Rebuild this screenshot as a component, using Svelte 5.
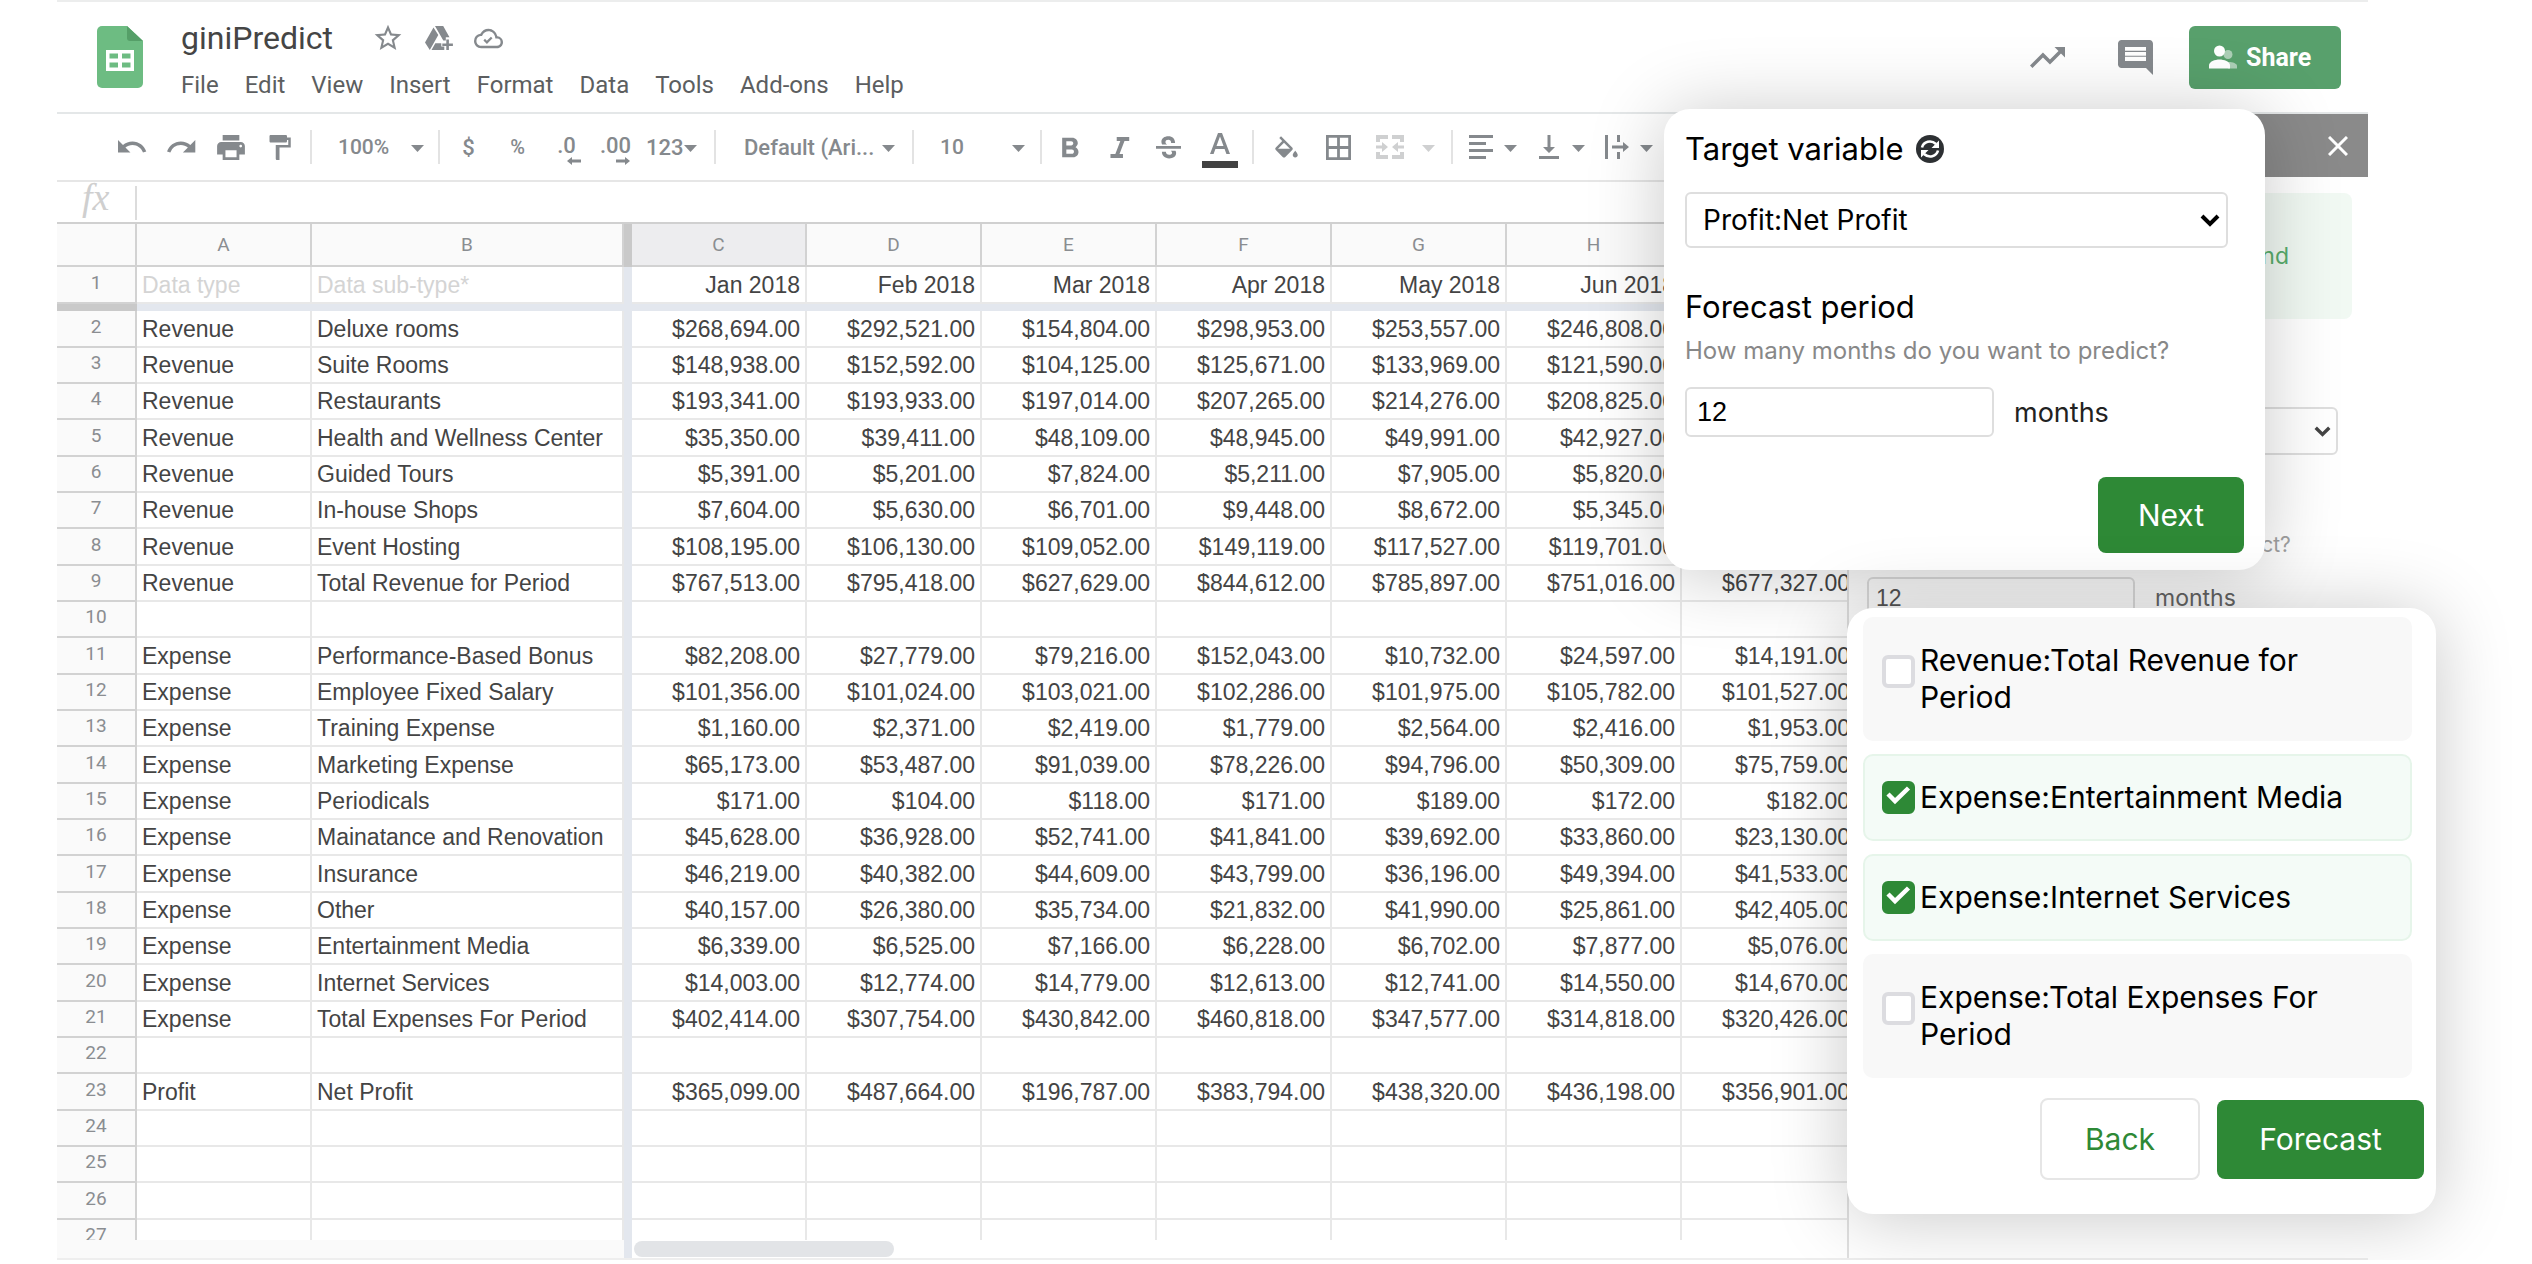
<script>
  const columns = ['C', 'D', 'E', 'F', 'G', 'H', 'I'];
  const months = ['Jan 2018', 'Feb 2018', 'Mar 2018', 'Apr 2018', 'May 2018', 'Jun 2018', ''];
  const menus = ['File', 'Edit', 'View', 'Insert', 'Format', 'Data', 'Tools', 'Add-ons', 'Help'];

  // type | sub-type | one whole-dollar amount per month
  const source = [
    'Revenue|Deluxe rooms|268,694 292,521 154,804 298,953 253,557 246,808',
    'Revenue|Suite Rooms|148,938 152,592 104,125 125,671 133,969 121,590',
    'Revenue|Restaurants|193,341 193,933 197,014 207,265 214,276 208,825',
    'Revenue|Health and Wellness Center|35,350 39,411 48,109 48,945 49,991 42,927',
    'Revenue|Guided Tours|5,391 5,201 7,824 5,211 7,905 5,820',
    'Revenue|In-house Shops|7,604 5,630 6,701 9,448 8,672 5,345',
    'Revenue|Event Hosting|108,195 106,130 109,052 149,119 117,527 119,701',
    'Revenue|Total Revenue for Period|767,513 795,418 627,629 844,612 785,897 751,016 677,327',
    '||',
    'Expense|Performance-Based Bonus|82,208 27,779 79,216 152,043 10,732 24,597 14,191',
    'Expense|Employee Fixed Salary|101,356 101,024 103,021 102,286 101,975 105,782 101,527',
    'Expense|Training Expense|1,160 2,371 2,419 1,779 2,564 2,416 1,953',
    'Expense|Marketing Expense|65,173 53,487 91,039 78,226 94,796 50,309 75,759',
    'Expense|Periodicals|171 104 118 171 189 172 182',
    'Expense|Mainatance and Renovation|45,628 36,928 52,741 41,841 39,692 33,860 23,130',
    'Expense|Insurance|46,219 40,382 44,609 43,799 36,196 49,394 41,533',
    'Expense|Other|40,157 26,380 35,734 21,832 41,990 25,861 42,405',
    'Expense|Entertainment Media|6,339 6,525 7,166 6,228 6,702 7,877 5,076',
    'Expense|Internet Services|14,003 12,774 14,779 12,613 12,741 14,550 14,670',
    'Expense|Total Expenses For Period|402,414 307,754 430,842 460,818 347,577 314,818 320,426',
    '||',
    'Profit|Net Profit|365,099 487,664 196,787 383,794 438,320 436,198 356,901',
    '||',
    '||',
    '||',
    '||'
  ];

  const rows = source.map((line, i) => {
    const [type, name, amounts] = line.split('|');
    const values = amounts ? amounts.split(' ') : [];
    return {
      number: i + 2,
      type,
      name,
      cells: columns.map((_, c) => (values[c] ? `$${values[c]}.00` : ''))
    };
  });

  let period = $state(12);
  let variables = $state([
    { label: 'Revenue:Total Revenue for Period', on: false, tall: true },
    { label: 'Expense:Entertainment Media', on: true, tall: false },
    { label: 'Expense:Internet Services', on: true, tall: false },
    { label: 'Expense:Total Expenses For Period', on: false, tall: true }
  ]);
</script>

{#snippet caret()}
  <svg class="caret" viewBox="0 0 13 7" aria-hidden="true"><path d="M0 0h13L6.5 7z" /></svg>
{/snippet}

{#snippet chevron()}
  <svg class="chevron" viewBox="0 0 20 13" aria-hidden="true"><path d="M2 2l8 8 8-8" /></svg>
{/snippet}

<div class="app">
  <header>
    <svg class="logo" viewBox="0 0 46 62" aria-label="Sheets">
      <path fill="#6dbc82" d="M5 0h25l16 15v42a5 5 0 0 1-5 5H5a5 5 0 0 1-5-5V5a5 5 0 0 1 5-5z" />
      <path fill="#559f68" d="M30 0l16 15H33a3 3 0 0 1-3-3z" />
      <path fill="#fff" fill-rule="evenodd" d="M9 24h28v21H9zM12.500 27.500v5h8.500v-5zM25 27.500v5h8.500v-5zM12.500 36.500v5h8.500v-5zM25 36.500v5h8.500v-5z" />
    </svg>
    <div class="heading">
      <div class="title">
        <h1>giniPredict</h1>
        <button aria-label="Star">
          <svg class="star" viewBox="0 0 24 24"><path d="M22 9.240l-7.190-.620L12 2 9.190 8.630 2 9.240l5.460 4.730L5.820 21 12 17.270 18.180 21l-1.630-7.030zM12 15.400l-3.760 2.270 1-4.280-3.320-2.880 4.380-.380L12 6.100l1.710 4.040 4.380.380-3.320 2.880 1 4.280z" /></svg>
        </button>
        <button aria-label="Add to Drive">
          <svg class="drive" viewBox="0 0 28 24"><path d="M8.500 1.500L13.300 9 4.800 24 0 16.500zM10 0h8.200l6.300 11.300h-3.700v3.200h-2.500zM10.300 17.200h6v3.400h3V24H6.500zM21.300 13.500h2.600v4h4v2.500h-4v4h-2.600v-4h-4v-2.500h4z" /></svg>
        </button>
        <button aria-label="Saved to Drive">
          <svg class="cloud" viewBox="0 0 24 24"><path d="M19.350 10.040A7.490 7.490 0 0 0 12 4C9.110 4 6.600 5.640 5.350 8.040A5.990 5.990 0 0 0 0 14c0 3.310 2.690 6 6 6h13c2.760 0 5-2.240 5-5 0-2.640-2.050-4.780-4.650-4.960zM19 18H6c-2.210 0-4-1.790-4-4 0-2.050 1.530-3.760 3.560-3.970l1.070-.110.500-.950A5.469 5.469 0 0 1 12 6c2.620 0 4.880 1.860 5.390 4.430l.300 1.500 1.530.110A2.980 2.980 0 0 1 22 15c0 1.650-1.350 3-3 3zM10.600 13.800l-1.500-1.500L7.800 13.600l2.900 2.900 4.600-4.700-1.300-1.300z" /></svg>
        </button>
      </div>
      <nav>
        {#each menus as menu}<a href="#{menu}">{menu}</a>{/each}
      </nav>
    </div>
    <div class="actions">
      <button aria-label="Activity">
        <svg class="trend" viewBox="2 6 20 12"><path d="M16 6l2.290 2.290-4.880 4.880-4-4L2 16.590 3.410 18l6-6 4 4 6.300-6.290L22 12V6z" /></svg>
      </button>
      <button aria-label="Comments">
        <svg class="comment" viewBox="2 2 20 20"><path d="M21.990 4c0-1.100-.890-2-1.990-2H4c-1.100 0-2 .900-2 2v12c0 1.100.900 2 2 2h14l4 4zM18 14H6v-2.400h12zm0-3H6V8.800h12zm0-2.900H6V6h12z" /></svg>
      </button>
      <button class="share">
        <svg viewBox="0 0 28 24" aria-hidden="true">
          <g opacity=".5"><circle cx="19" cy="9.500" r="4.500" /><path d="M19 17c5 0 9 1.500 9 4v2.500h-9z" /></g>
          <circle cx="10.500" cy="6" r="5.500" /><path d="M0 23.500v-3C0 16.500 6 14.500 10.500 14.500S21 16.500 21 20.500v3z" />
        </svg>
        Share
      </button>
    </div>
  </header>

  <div class="body">
    <main>
      <div class="toolbar" role="toolbar" aria-label="Formatting">
        <button class="tool" aria-label="Undo"><svg class="wide" viewBox="2 7 21 10"><path d="M12.500 8c-2.650 0-5.050.990-6.900 2.600L2 7v9h9l-3.620-3.620c1.390-1.160 3.160-1.880 5.120-1.880 3.540 0 6.550 2.310 7.600 5.500l2.370-.780C21.080 11.030 17.150 8 12.500 8z" /></svg></button>
        <button class="tool" aria-label="Redo"><svg class="wide" viewBox="1.500 7 21 10"><path d="M18.400 10.600C16.550 8.990 14.150 8 11.500 8c-4.650 0-8.580 3.030-9.960 7.220L3.900 16a8.002 8.002 0 0 1 7.600-5.500c1.950 0 3.730.720 5.120 1.880L13 16h9V7z" /></svg></button>
        <button class="tool" aria-label="Print"><svg class="print" viewBox="2 3 20 18"><path d="M19 8H5c-1.660 0-3 1.340-3 3v6h4v4h12v-4h4v-6c0-1.660-1.340-3-3-3zm-3 11H8v-5h8zm3-7c-.550 0-1-.450-1-1s.450-1 1-1 1 .450 1 1-.450 1-1 1zM18 3H6v4h12z" /></svg></button>
        <button class="tool" aria-label="Paint format"><svg viewBox="2 2 20 20"><path d="M18 4V3c0-.550-.450-1-1-1H5c-.550 0-1 .450-1 1v4c0 .550.450 1 1 1h12c.550 0 1-.450 1-1V6h1v4H9v11c0 .550.450 1 1 1h2V12h9V4z" /></svg></button>
        <span class="sep"></span>
        <label class="pick zoom"><select aria-label="Zoom"><option>100%</option></select>{@render caret()}</label>
        <span class="sep"></span>
        <button class="tool">$</button>
        <button class="tool small">%</button>
        <button class="tool decimal" aria-label="Decrease decimal places">.0<svg viewBox="0 0 14 8"><path d="M5 0v2.500h9v3H5V8L0 4z" /></svg></button>
        <button class="tool decimal" aria-label="Increase decimal places">.00<svg viewBox="0 0 14 8"><path d="M9 0v2.500H0v3h9V8l5-4z" /></svg></button>
        <button class="number">123{@render caret()}</button>
        <span class="sep"></span>
        <label class="pick font"><select aria-label="Font"><option>Default (Ari...</option></select>{@render caret()}</label>
        <span class="sep"></span>
        <label class="pick size"><select aria-label="Font size"><option>10</option></select>{@render caret()}</label>
        <span class="sep"></span>
        <button class="tool" aria-label="Bold"><svg viewBox="3 3 18 18"><path d="M15.600 11.790c.970-.670 1.650-1.770 1.650-2.790 0-2.260-1.750-4-4-4H6v14h8.040c2.090 0 3.710-1.700 3.710-3.790 0-1.520-.860-2.820-2.150-3.420zM9 7.500h3.500c.830 0 1.500.670 1.500 1.500s-.670 1.500-1.500 1.500H9zm4 9H9v-3h4c.830 0 1.500.670 1.500 1.500s-.670 1.500-1.500 1.500z" /></svg></button>
        <button class="tool" aria-label="Italic"><svg viewBox="3 3 18 18"><path d="M10 4.500v2.800h2.600l-3.600 9.400H5.500v2.800h9v-2.800H12l3.600-9.400h3.400V4.500z" /></svg></button>
        <button class="tool" aria-label="Strikethrough"><svg viewBox="2.500 3 19 19"><path d="M2.500 11.300h19v2.200h-19zM17 9h-3c0-1.500-.800-2.300-2.200-2.300-1.300 0-2.100.700-2.100 1.600 0 .800.400 1.400 1.300 1.900H7.200a4 4 0 0 1-.600-2.100C6.600 5.700 8.900 4 11.900 4 15 4 17 6 17 9zM7 15.800h3c.100 1.500 1 2.300 2.500 2.300 1.300 0 2.200-.600 2.200-1.600 0-.700-.300-1.200-.900-1.600h3.500c.300.500.500 1.100.500 1.800 0 2.500-2.200 4.100-5.300 4.100C9.200 20.800 7 18.900 7 15.800z" /></svg></button>
        <button class="tool color" aria-label="Text color"><svg viewBox="0 0 36 36"><path d="M16 0h4l8 21h-3.600l-1.800-5h-9.200l-1.800 5H8zM14.500 13h7L18 3.600z" /><path class="ink" d="M0 28h36v7H0z" /></svg></button>
        <span class="sep"></span>
        <button class="tool fill" aria-label="Fill color"><svg viewBox="2 0 20 18"><path d="M16.560 8.940L7.620 0 6.210 1.410l2.380 2.380-5.150 5.150a1.490 1.490 0 0 0 0 2.120l5.500 5.500c.290.290.680.440 1.060.440s.770-.150 1.060-.440l5.500-5.500c.590-.580.590-1.530 0-2.120zM5.210 10L10 5.210 14.790 10zM19 11.500s-2 2.170-2 3.500c0 1.100.900 2 2 2s2-.900 2-2c0-1.330-2-3.500-2-3.500z" /></svg></button>
        <button class="tool" aria-label="Borders"><svg viewBox="3 3 18 18"><path d="M3 3v18h18V3zm8 16H5v-6h6zm0-8H5V5h6zm8 8h-6v-6h6zm0-8h-6V5h6z" /></svg></button>
        <button class="merge" aria-label="Merge cells"><svg viewBox="0 0 28 24"><path d="M0 0h12v4H4v3H0zM16 0h12v7h-4V4h-8zM0 17h4v3h8v4H0zM24 17h4v7H16v-4h8zM0 10.500h6V7l6 5-6 5v-3.500H0zM28 10.500h-6V7l-6 5 6 5v-3.500h6z" /></svg>{@render caret()}</button>
        <span class="sep"></span>
        <button class="drop" aria-label="Horizontal align"><svg viewBox="0 0 24 24"><path d="M0 0h24v3H0zM0 7h17v3H0zM0 14h24v3H0zM0 21h17v3H0z" /></svg>{@render caret()}</button>
        <button class="drop" aria-label="Vertical align"><svg viewBox="0 0 24 24"><path d="M2 21h20v3H2zM10.500 0h3v12H18l-6 6-6-6h4.500z" /></svg>{@render caret()}</button>
        <button class="drop" aria-label="Text wrapping"><svg viewBox="0 0 24 24"><path d="M0 0h3v24H0zM12 0h3v7h-3zM12 17h3v7h-3zM7 10.500h11V7l6 5-6 5v-3.500H7z" /></svg>{@render caret()}</button>
      </div>

      <div class="formula">
        <label for="formula">fx</label>
        <input id="formula" type="text" />
      </div>

      <div class="viewport">
        <table>
          <colgroup>
            <col class="c-head" /><col class="c-a" /><col class="c-b" /><col class="c-freeze" />
            {#each columns as c}<col class="c-month" />{/each}
          </colgroup>
          <thead>
            <tr>
              <th></th><th>A</th><th>B</th><th class="freeze"></th>
              {#each columns as c}<th class:selected={c === 'C'}>{c}</th>{/each}
            </tr>
          </thead>
          <tbody class="frozen">
            <tr>
              <th>1</th><td class="hint">Data type</td><td class="hint">Data sub-type*</td><td class="freeze"></td>
              {#each months as month}<td class="value">{month}</td>{/each}
            </tr>
            <tr class="bar"><th></th><td colspan="10"></td></tr>
          </tbody>
          <tbody class="data">
            {#each rows as row}
              <tr>
                <th>{row.number}</th><td>{row.type}</td><td>{row.name}</td><td class="freeze"></td>
                {#each row.cells as cell}<td class="value">{cell}</td>{/each}
              </tr>
            {/each}
          </tbody>
        </table>
      </div>
      <div class="scroll"><span class="corner"></span><span class="thumb"></span></div>
    </main>

    <aside>
      <div class="bar-top">
        <button aria-label="Close"><svg viewBox="0 0 20 20"><path d="M1 1l18 18M19 1L1 19" /></svg></button>
      </div>
      <div class="pane">
        <p class="notice">and</p>
        <div class="choose"><select aria-label="Sidebar target variable"><option></option></select>{@render chevron()}</div>
        <p class="ask">How many months do you want to predict?</p>
        <div class="months"><input id="side-months" type="text" value="12" /><label for="side-months">months</label></div>
      </div>
    </aside>
  </div>

  <section class="card target">
    <h2>
      <label for="target">Target variable</label>
      <svg viewBox="0 0 28 28" aria-hidden="true">
        <circle cx="14" cy="14" r="14" fill="#2d3033" />
        <path d="M6 12.500C7.500 6.500 15 4.500 20 9M22 15.500C20.500 21.500 13 23.500 8 19" fill="none" stroke="#fff" stroke-width="2.600" />
        <path d="M23 5.500V13h-7.500zM5 22.500V15h7.500z" fill="#fff" />
      </svg>
    </h2>
    <div class="choose"><select id="target"><option>Profit:Net Profit</option></select>{@render chevron()}</div>
    <h2><label for="period">Forecast period</label></h2>
    <p class="ask">How many months do you want to predict?</p>
    <div class="months"><input id="period" type="text" bind:value={period} /><span>months</span></div>
    <div class="buttons"><button class="primary">Next</button></div>
  </section>

  <section class="card variables">
    {#each variables as variable}
      <label class="variable" class:on={variable.on} class:tall={variable.tall}>
        <span class="tick">
          <input type="checkbox" bind:checked={variable.on} />
          {#if variable.on}<svg viewBox="0 0 33 33" aria-hidden="true"><path d="M6 13l7 7L26.500 7" /></svg>{/if}
        </span>
        <span>{variable.label}</span>
      </label>
    {/each}
    <div class="buttons">
      <button class="secondary">Back</button>
      <button class="primary">Forecast</button>
    </div>
  </section>
</div>

<style>
  :global(body) {
    background: #fff;
    overflow: hidden;
  }
  * {
    box-sizing: border-box;
  }
  button,
  input,
  select {
    margin: 0;
    padding: 0;
    border: 0;
    border-radius: 0;
    background: none;
    color: inherit;
    font: inherit;
    appearance: none;
  }
  h1, h2, p {
    margin: 0;
    font-weight: 400;
  }
  svg {
    display: block;
    fill: currentColor;
    flex: none;
  }
  .app {
    position: relative;
    display: flex;
    flex-direction: column;
    height: calc(100vh - 4px);
    margin: 0 164px 0 57px;
    border-top: 2px solid #eceded;
    border-bottom: 2px solid #eeeeee;
    font-family: Roboto, sans-serif;
    color: #85898d;
  }

  /* Title bar */
  header {
    display: flex;
    flex: none;
    height: 112px;
    padding-left: 40px;
    padding-right: 27px;
    border-bottom: 2px solid #e4e7e8;
  }
  .logo {
    width: 46px;
    height: 62px;
    margin-top: 24px;
  }
  .heading {
    flex: 1;
    padding: 14px 0 0 38px;
  }
  .title {
    display: flex;
    align-items: center;
    gap: 21px;
    height: 44px;
  }
  .title .star {
    width: 32px;
    height: 32px;
  }
  .title .drive {
    width: 28px;
    height: 24px;
  }
  .title .cloud {
    width: 29px;
    height: 29px;
  }
  h1 {
    margin-right: 18px;
    color: #454545;
    font-size: 32px;
    line-height: 44px;
  }
  nav {
    display: flex;
    gap: 26px;
    margin-top: 11px;
  }
  nav a {
    color: #5c5e60;
    font-size: 24px;
    line-height: 28px;
    text-decoration: none;
  }
  .actions {
    display: flex;
    align-items: center;
    height: 110px;
  }
  .trend {
    width: 35px;
    height: 21px;
    margin-right: 53px;
  }
  .comment {
    width: 35px;
    height: 35px;
    margin-right: 36px;
  }
  .share {
    display: flex;
    align-items: center;
    gap: 9px;
    width: 152px;
    height: 63px;
    padding-left: 20px;
    border-radius: 6px;
    background: #58a06c;
    color: #fff;
    font-size: 25px;
    font-weight: 700;
  }
  .share svg {
    width: 28px;
    height: 24px;
  }

  .body {
    display: flex;
    flex: 1;
    min-height: 0;
  }
  main {
    display: flex;
    flex: 1;
    flex-direction: column;
    min-width: 0;
    overflow: hidden;
  }

  /* Toolbar */
  .toolbar {
    display: flex;
    flex: none;
    align-items: center;
    height: 68px;
    padding-left: 51px;
    border-bottom: 2px solid #e6e6e6;
    font-size: 22px;
    font-weight: 500;
  }
  .toolbar > * {
    flex: none;
  }
  .tool {
    display: flex;
    align-items: center;
    justify-content: center;
    width: 49px;
    height: 48px;
  }
  .tool svg {
    width: 25px;
    height: 25px;
  }
  .tool .wide {
    width: 29px;
    height: 14px;
  }
  .tool .print {
    width: 28px;
    height: 25px;
  }
  .small {
    font-size: 20px;
  }
  .color {
    width: 53px;
  }
  .tool.color svg {
    width: 36px;
    height: 36px;
    margin-top: 8px;
  }
  .ink {
    fill: #424242;
  }
  .fill {
    width: 56px;
  }
  .decimal {
    flex-direction: column;
    align-items: center;
    padding-top: 6px;
    line-height: 22px;
  }
  .tool.decimal svg {
    width: 14px;
    height: 8px;
    margin-left: 14px;
  }
  .sep {
    width: 2px;
    height: 34px;
    margin: 0 4px 0 6px;
    background: #e3e3e3;
  }
  .caret {
    width: 13px;
    height: 7px;
    margin-top: 2px;
  }
  .pick {
    display: flex;
    align-items: center;
  }
  .pick select {
    flex: 1;
    min-width: 0;
    height: 40px;
  }
  .zoom {
    width: 116px;
    padding: 0 8px 0 22px;
    font-size: 21px;
  }
  .font {
    width: 186px;
    padding: 0 11px 0 24px;
  }
  .size {
    width: 116px;
    padding: 0 9px 0 22px;
    font-size: 21px;
  }
  .number {
    display: flex;
    align-items: center;
    justify-content: space-between;
    width: 68px;
    padding: 0 11px 0 6px;
  }
  .merge {
    display: flex;
    align-items: center;
    gap: 18px;
    width: 82px;
    padding-left: 13px;
    color: #cfd0d1;
  }
  .merge svg:first-child {
    width: 28px;
    height: 24px;
  }
  .drop {
    display: flex;
    align-items: center;
    gap: 11px;
    width: 68px;
    padding-left: 12px;
  }
  .drop svg:first-child {
    width: 24px;
    height: 24px;
  }

  /* Formula bar */
  .formula {
    display: flex;
    flex: none;
    height: 42px;
    border-bottom: 2px solid #d0d0d0;
  }
  .formula label {
    width: 80px;
    height: 34px;
    margin-top: 4px;
    padding-left: 25px;
    border-right: 2px solid #dcdcdc;
    color: #cfcfcf;
    font: italic 38px/22px "Liberation Serif", serif;
  }
  .formula input {
    flex: 1;
  }

  /* Spreadsheet */
  .viewport {
    flex: 1;
    min-height: 0;
    overflow: hidden;
  }
  table {
    width: 1800px;
    border-spacing: 0;
    table-layout: fixed;
  }
  .c-head { width: 80px; }
  .c-a { width: 175px; }
  .c-b { width: 312px; }
  .c-freeze { width: 8px; }
  .c-month { width: 175px; }
  th,
  td {
    padding: 0 5px;
    border-right: 2px solid #e8e8e8;
    border-bottom: 2px solid #e8e8e8;
    white-space: nowrap;
    overflow: hidden;
  }
  th {
    padding-bottom: 4px;
    border-color: #d2d2d2;
    background: #fafafa;
    color: #8a8d91;
    font-size: 19px;
    font-weight: 400;
    line-height: 22px;
  }
  td {
    color: #444;
    font: 23px/26px "Liberation Sans", Arial, sans-serif;
  }
  .value {
    text-align: right;
  }
  thead th {
    height: 43px;
    padding-bottom: 0;
  }
  .selected {
    background: #ededef;
  }
  .frozen tr {
    height: 37px;
  }
  .hint {
    color: #d4d4d4;
  }
  .freeze {
    padding: 0;
    border: 0;
    background: #e3e7ee;
  }
  th.freeze {
    background: #c9c9c9;
  }
  .frozen .bar {
    height: 7px;
  }
  .bar th,
  .bar td {
    height: 7px;
    padding: 0;
    border: 0;
    background: #e3e7ee;
    font-size: 1px;
    line-height: 1px;
  }
  .bar th {
    background: #c9c9c9;
  }
  .data tr {
    height: 36px;
  }
  .data tr:nth-child(3n + 1) {
    height: 37px;
  }
  .scroll {
    display: flex;
    flex: none;
    align-items: center;
    height: 18px;
  }
  .corner {
    width: 575px;
    height: 18px;
    border-right: 8px solid #e3e7ee;
    background: #fafafa;
  }
  .thumb {
    width: 260px;
    height: 16px;
    margin-left: 2px;
    border-radius: 8px;
    background: #e2e4e7;
  }

  /* Sidebar */
  aside {
    flex: none;
    width: 521px;
    border-left: 2px solid #e0e0e0;
    font-family: Inter, sans-serif;
  }
  .bar-top {
    display: flex;
    align-items: center;
    justify-content: flex-end;
    height: 63px;
    padding-right: 20px;
    background: #8a8a8a;
    color: #fff;
  }
  .bar-top svg {
    width: 20px;
    height: 20px;
    stroke: currentColor;
    stroke-width: 3;
  }
  .pane {
    padding: 16px 16px 0 18px;
  }
  .notice {
    height: 126px;
    padding-right: 63px;
    border-radius: 8px;
    background: #f1f9f3;
    color: #58ad6c;
    font-size: 23px;
    line-height: 126px;
    text-align: right;
  }
  .choose {
    position: relative;
    color: #000;
  }
  .choose select {
    width: 100%;
    height: 56px;
    padding-left: 16px;
    border: 2px solid #dedede;
    border-radius: 6px;
    font-size: 28px;
  }
  .chevron {
    position: absolute;
    top: 22px;
    right: 8px;
    width: 20px;
    height: 13px;
    fill: none;
    stroke: currentColor;
    stroke-width: 4;
    pointer-events: none;
  }
  .pane .choose {
    margin: 88px 14px 0 0;
    color: #444;
  }
  .pane .choose select {
    height: 48px;
    font-size: 22px;
  }
  .pane .chevron {
    top: 19px;
    right: 7px;
    width: 17px;
    height: 11px;
  }
  .ask {
    color: #888;
    font-size: 24px;
    line-height: 28px;
  }
  .pane .ask {
    margin-top: 76px;
    color: #a2a2a2;
    font-size: 21px;
  }
  .months {
    display: flex;
    align-items: center;
    gap: 20px;
    color: #222;
    font-size: 27px;
  }
  .months input {
    width: 309px;
    height: 50px;
    padding-left: 10px;
    border: 2px solid #dedede;
    border-radius: 6px;
    color: #000;
    font: 27px "Liberation Sans", sans-serif;
  }
  .pane .months {
    margin-top: 18px;
    color: #666;
    font-size: 23px;
  }
  .pane .months input {
    width: 268px;
    height: 42px;
    padding-left: 7px;
    color: #555;
    font-size: 23px;
  }

  /* Floating cards */
  .card {
    position: absolute;
    border-radius: 26px;
    background: #fff;
    box-shadow: 0 4px 76px rgba(0, 0, 0, 0.22);
    color: #000;
    font-family: Inter, sans-serif;
  }
  .target {
    top: 107px;
    right: 103px;
    width: 601px;
    padding: 22px 21px 17px 21px;
  }
  h2 {
    display: flex;
    align-items: center;
    gap: 12px;
    font-size: 31px;
    line-height: 36px;
  }
  h2 svg {
    width: 28px;
    height: 28px;
  }
  .target .choose {
    margin: 25px 16px 41px 0;
  }
  .target .ask {
    margin: 12px 0 22px;
  }
  .buttons {
    display: flex;
    justify-content: flex-end;
    align-items: center;
    gap: 17px;
    font-size: 30px;
  }
  .target .buttons {
    margin-top: 40px;
  }
  .primary {
    width: 146px;
    height: 76px;
    border-radius: 8px;
    background: #2e8936;
    color: #fff;
  }
  .variables {
    top: 606px;
    right: -68px;
    width: 589px;
    padding: 9px 24px 34px 16px;
  }
  .variable {
    display: flex;
    align-items: center;
    gap: 5px;
    margin-bottom: 13px;
    padding: 25px 50px 25px 19px;
    border-radius: 10px;
    background: #f8f8f8;
    font-size: 30px;
    line-height: 37px;
  }
  .on {
    padding: 23px 20px 23px 17px;
    border: 2px solid #e6f5ea;
    background: #f4fbf7;
  }
  .tick {
    display: grid;
    flex: none;
    width: 33px;
    height: 33px;
  }
  .tall .tick {
    margin-bottom: 16px;
  }
  .tick > * {
    grid-area: 1 / 1;
    width: 33px;
    height: 33px;
  }
  .tick input {
    border: 4px solid #dcdce0;
    border-radius: 6px;
    background: #fff;
  }
  .tick input:checked {
    border-color: #2e8936;
    background: #2e8936;
  }
  .tick svg {
    position: relative;
    fill: none;
    stroke: #fff;
    stroke-width: 4.5;
    pointer-events: none;
  }
  .variables .buttons {
    margin: 20px -12px 0 0;
  }
  .secondary {
    width: 160px;
    height: 82px;
    border: 2px solid #e6e6e6;
    border-radius: 8px;
    color: #2e8936;
  }
  .variables .primary {
    width: 207px;
    height: 79px;
  }
</style>
